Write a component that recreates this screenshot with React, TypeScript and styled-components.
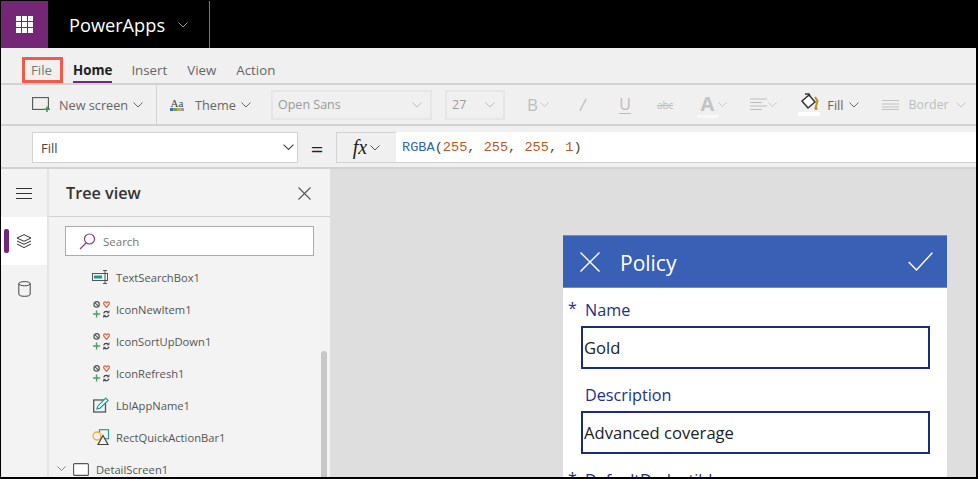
import React from 'react'
import styled, { createGlobalStyle } from 'styled-components'

const GlobalStyle = createGlobalStyle`
  html, body {
    margin: 0;
    padding: 0;
    overflow: hidden;
    background: #000;
  }
`

const Chevron = ({ size = 10, color = '#666' }: { size?: number; color?: string }) => (
  <svg width={size} height={size * 0.6} viewBox="0 0 10 6" fill="none" stroke={color} strokeWidth="1">
    <path d="M0.5 0.5 L5 5 L9.5 0.5" />
  </svg>
)

const Waffle = () => (
  <svg width="17" height="17" viewBox="0 0 17 17" fill="#fff">
    {[0, 6, 12].map(y =>
      [0, 6, 12].map(x => <rect key={`${x}-${y}`} x={x} y={y} width="5" height="5" />),
    )}
  </svg>
)

const MultiIcon = () => (
  <svg width="17" height="17" viewBox="0 0 17 17" fill="none">
    <circle cx="3.6" cy="3.4" r="2.7" stroke="#555" strokeWidth="1.2" />
    <path d="M1.8 1.6 L5.4 5.2" stroke="#555" strokeWidth="1.1" />
    <path d="M13.5 6.4 L10.8 3.2 Q10.2 0.9 12 0.9 L13.5 1.8 L15 0.9 Q16.8 0.9 16.2 3.2 Z" stroke="#e8683a" strokeWidth="1.2" />
    <path d="M3.6 9.6 V16.4 M0 13 H7.2" stroke="#4aa564" strokeWidth="1.5" />
    <path d="M10.6 12.4 Q11.4 10.2 13.6 10.4 L15.6 11.2 M16 13.8 Q15.2 16 13 15.8 L11 15" stroke="#444" strokeWidth="1.2" />
    <path d="M16 9.6 V11.8 H13.8 M10.6 16.6 V14.4 H12.8" stroke="#444" strokeWidth="0.9" />
  </svg>
)

const TextBoxIcon = () => (
  <svg width="18" height="14" viewBox="0 0 18 14" fill="none">
    <rect x="0.5" y="3.5" width="15" height="7" fill="none" stroke="#555" />
    <rect x="2" y="5.5" width="8" height="3" fill="#1a9a8c" />
    <path d="M11 0.5 H15 M13 0.5 V13.5 M11 13.5 H15" stroke="#555" strokeWidth="1" />
  </svg>
)

const LabelIcon = () => (
  <svg width="16" height="16" viewBox="0 0 16 16" fill="none">
    <rect x="0.7" y="3" width="11.8" height="12" stroke="#555" strokeWidth="1.3" />
    <path d="M4 12 L4.8 9.2 L12.8 1.2 L15 3.4 L7 11.2 Z" fill="#fff" stroke="#1a9a8c" strokeWidth="1.2" />
  </svg>
)

const ShapesIcon = () => (
  <svg width="18" height="17" viewBox="0 0 18 17" fill="none">
    <rect x="7.5" y="0.7" width="9" height="9" stroke="#2a9d8f" strokeWidth="1.2" />
    <circle cx="5" cy="7" r="4" fill="#f3f3f3" stroke="#f0b030" strokeWidth="1.3" />
    <path d="M11 6.5 L16 15.5 H6 Z" fill="#f3f3f3" stroke="#444" strokeWidth="1.2" />
  </svg>
)

const ScreenIcon = () => (
  <svg width="16" height="13" viewBox="0 0 16 13" fill="none">
    <rect x="0.6" y="0.6" width="14.8" height="11.8" rx="1" fill="#fff" stroke="#555" strokeWidth="1.1" />
  </svg>
)

const treeRows = [
  { name: 'TextSearchBox1', icon: <TextBoxIcon /> },
  { name: 'IconNewItem1', icon: <MultiIcon /> },
  { name: 'IconSortUpDown1', icon: <MultiIcon /> },
  { name: 'IconRefresh1', icon: <MultiIcon /> },
  { name: 'LblAppName1', icon: <LabelIcon /> },
  { name: 'RectQuickActionBar1', icon: <ShapesIcon /> },
]

export default function App() {
  return (
    <Frame>
      <GlobalStyle />
      <TopBar>
        <WaffleButton>
          <Waffle />
        </WaffleButton>
        <AppSwitcher>
          <AppName>PowerApps</AppName>
          <Chevron size={10} color="#9a9a9a" />
        </AppSwitcher>
      </TopBar>

      <MenuRow>
        <MenuTab $boxed>File</MenuTab>
        <MenuTab $active>Home</MenuTab>
        <MenuTab>Insert</MenuTab>
        <MenuTab>View</MenuTab>
        <MenuTab>Action</MenuTab>
      </MenuRow>

      <Toolbar>
        <ToolGroup $width={124}>
          <svg width="19" height="15" viewBox="0 0 19 15" fill="none">
            <rect x="0.6" y="0.6" width="15.8" height="11.8" fill="none" stroke="#555" strokeWidth="1.1" />
            <path d="M15 9.5 V15 M12.5 12.2 H18" stroke="#3c9a4f" strokeWidth="1.6" />
          </svg>
          <ToolLabel $left={8}>New screen</ToolLabel>
          <Chevron />
        </ToolGroup>
        <ToolDivider />
        <ToolGroup $width={101}>
          <ThemeMark>
            <ThemeText>Aa</ThemeText>
            <svg width="14" height="3" viewBox="0 0 14 3">
              <rect width="3.5" height="3" fill="#3a6fb5" />
              <rect x="3.5" width="3.5" height="3" fill="#6aa84f" />
              <rect x="7" width="3.5" height="3" fill="#e0a030" />
              <rect x="10.5" width="3.5" height="3" fill="#999" />
            </svg>
          </ThemeMark>
          <ToolLabel $left={11}>Theme</ToolLabel>
          <Chevron />
        </ToolGroup>
        <SelectBox $width={161}>
          Open Sans
          <Chevron color="#bbb" />
        </SelectBox>
        <SelectBox $width={60} $left={13}>
          27
          <Chevron color="#bbb" />
        </SelectBox>
        <GlyphB>B</GlyphB>
        <Chevron color="#c4c4c4" size={9} />
        <GlyphItalic>/</GlyphItalic>
        <GlyphUnderline>U</GlyphUnderline>
        <GlyphStrike>abc</GlyphStrike>
        <FontColor>
          A<FontColorBar />
        </FontColor>
        <Chevron color="#c4c4c4" size={9} />
        <AlignIcon width="17" height="14" viewBox="0 0 17 14" stroke="#bdbdbd">
          <path d="M0 1 H17 M0 4.5 H12 M0 8 H17 M0 11.5 H12" />
        </AlignIcon>
        <Chevron color="#c4c4c4" size={9} />
        <FillGroup>
          <svg width="20" height="18" viewBox="0 0 20 18" fill="none">
            <path d="M3 8 L10 2 L16 9 L9 15 Z" fill="#fff" stroke="#333" strokeWidth="1.5" />
            <path d="M6 1 H10 L11 3" stroke="#333" strokeWidth="1.5" />
            <path d="M16 4 L18.5 8 L16.5 15" stroke="#b8932a" strokeWidth="2" />
            <circle cx="17" cy="15.5" r="1.6" fill="#b8932a" />
          </svg>
          <FillBar />
        </FillGroup>
        <ToolLabel $left={7}>Fill</ToolLabel>
        <ToolChevron>
          <Chevron />
        </ToolChevron>
        <BorderIcon width="17" height="10" viewBox="0 0 17 10" stroke="#c2c2c2">
          <path d="M0 0.5 H17 M0 4 H17 M0 7 H17 M0 9.5 H17" />
        </BorderIcon>
        <BorderLabel>Border</BorderLabel>
        <ToolChevron>
          <Chevron color="#c4c4c4" />
        </ToolChevron>
      </Toolbar>

      <FormulaRow>
        <PropertySelect>
          Fill
          <Chevron size={11} color="#444" />
        </PropertySelect>
        <EqualsSign>=</EqualsSign>
        <FxButton>
          <FxMark>fx</FxMark>
          <Chevron color="#555" />
        </FxButton>
        <FormulaInput>
          <FnName>RGBA</FnName>(<Num>255</Num>, <Num>255</Num>, <Num>255</Num>, <Num>1</Num>)
        </FormulaInput>
      </FormulaRow>

      <Main>
        <Rail>
          <RailItem>
            <svg width="16" height="11" viewBox="0 0 16 11" stroke="#333">
              <path d="M0 0.5 H16 M0 5.5 H16 M0 10.5 H16" />
            </svg>
          </RailItem>
          <RailItem $active>
            <RailMarker />
            <svg width="16" height="15" viewBox="0 0 16 15" fill="none" stroke="#333">
              <path d="M8 0.7 L15 4 L8 7.3 L1 4 Z" />
              <path d="M1 7 L8 10.3 L15 7" />
              <path d="M1 10 L8 13.6 L15 10" />
            </svg>
          </RailItem>
          <RailItem>
            <svg width="13" height="16" viewBox="0 0 13 16" fill="none" stroke="#444">
              <ellipse cx="6.5" cy="2.7" rx="5.7" ry="2.1" />
              <path d="M0.8 2.7 V13 Q0.8 15.3 6.5 15.3 Q12.2 15.3 12.2 13 V2.7" />
            </svg>
          </RailItem>
        </Rail>

        <TreePanel>
          <TreeHeader>
            <TreeTitle>Tree view</TreeTitle>
            <svg width="13" height="13" viewBox="0 0 13 13" stroke="#555" strokeWidth="1.1">
              <path d="M0.5 0.5 L12.5 12.5 M12.5 0.5 L0.5 12.5" />
            </svg>
          </TreeHeader>
          <SearchBox>
            <svg width="17" height="17" viewBox="0 0 17 17" fill="none" stroke="#8a3f8a" strokeWidth="1.2">
              <circle cx="10.5" cy="6" r="5" />
              <path d="M7 10 L1 16" />
            </svg>
            Search
          </SearchBox>
          <TreeList>
            {treeRows.map(row => (
              <TreeRow key={row.name}>
                <TreeIcon>{row.icon}</TreeIcon>
                {row.name}
              </TreeRow>
            ))}
            <ScreenRow>
              <Chevron size={9} color="#777" />
              <ScreenIcon />
              DetailScreen1
            </ScreenRow>
          </TreeList>
          <ScrollThumb />
        </TreePanel>

        <Canvas>
          <Card>
            <CardHeader>
              <svg width="20" height="20" viewBox="0 0 20 20" stroke="#fff" strokeWidth="1.4">
                <path d="M0.5 0.5 L19.5 19.5 M19.5 0.5 L0.5 19.5" />
              </svg>
              <CardTitle>Policy</CardTitle>
              <svg width="25" height="19" viewBox="0 0 25 19" fill="none" stroke="#fff" strokeWidth="1.4">
                <path d="M0.7 10 L8.5 18 L24.4 0.7" />
              </svg>
            </CardHeader>
            <Field>
              <FieldLabel $required>Name</FieldLabel>
              <FieldInput>Gold</FieldInput>
            </Field>
            <Field>
              <FieldLabel>Description</FieldLabel>
              <FieldInput>Advanced coverage</FieldInput>
            </Field>
            <Field>
              <FieldLabel $required>DefaultDeductible</FieldLabel>
            </Field>
          </Card>
        </Canvas>
      </Main>
    </Frame>
  )
}

const Frame = styled.div`
  box-sizing: border-box;
  width: 978px;
  height: 479px;
  border-left: 1px solid #000;
  border-right: 2px solid #000;
  border-bottom: 2px solid #000;
  display: flex;
  flex-direction: column;
  overflow: hidden;
  background: #f0f0f0;
  font-family: 'Open Sans', sans-serif;
`

const TopBar = styled.div`
  flex: none;
  height: 48px;
  display: flex;
  background: #000;
`

const WaffleButton = styled.div`
  width: 47px;
  margin-top: 1px;
  display: flex;
  align-items: center;
  justify-content: center;
  background: #742774;
`

const AppSwitcher = styled.div`
  width: 162px;
  margin-top: 1px;
  padding-left: 21px;
  box-sizing: border-box;
  display: flex;
  align-items: center;
  gap: 13px;
  border-right: 1px solid #777;
`

const AppName = styled.span`
  color: #fff;
  font-size: 18.2px;
  line-height: 24px;
`

const MenuRow = styled.div`
  flex: none;
  box-sizing: border-box;
  height: 37px;
  padding: 9px 0 0 21px;
  display: flex;
  align-items: flex-start;
  gap: 20px;
  border-bottom: 2px solid #d2d2d2;
`

const MenuTab = styled.div<{ $active?: boolean; $boxed?: boolean }>`
  box-sizing: border-box;
  height: ${p => (p.$boxed ? '26px' : '24px')};
  margin-top: ${p => (p.$boxed ? '0' : '2px')};
  margin-right: ${p => (p.$boxed ? '-10px' : p.$active ? '-1px' : '0')};
  padding: ${p => (p.$boxed ? '0 8px 0 6px' : '0')};
  border: ${p => (p.$boxed ? '3px solid #f4594b' : 'none')};
  border-width: ${p => (p.$boxed ? '3px' : '0')};
  border-bottom: ${p => (p.$active ? '2px solid #742774' : p.$boxed ? '3px solid #f4594b' : 'none')};
  color: ${p => (p.$active ? '#222' : p.$boxed ? '#777' : '#666')};
  font-size: 13.3px;
  font-weight: ${p => (p.$active ? 700 : 400)};
  line-height: ${p => (p.$boxed ? '20px' : '22px')};
`

const Toolbar = styled.div`
  flex: none;
  box-sizing: border-box;
  height: 41px;
  padding-left: 31px;
  display: flex;
  align-items: center;
  border-bottom: 2px solid #d2d2d2;
  color: #666;
  font-size: 12.7px;
`

const ToolGroup = styled.div<{ $width: number }>`
  width: ${p => p.$width}px;
  flex: none;
  display: flex;
  align-items: center;
`

const ToolLabel = styled.span<{ $left?: number }>`
  margin-left: ${p => p.$left ?? 0}px;
  margin-right: 5px;
`

const ToolDivider = styled.div`
  width: 1px;
  height: 39px;
  margin-right: 13px;
  background: #d2d2d2;
`

const ThemeMark = styled.div`
  width: 14px;
  display: flex;
  flex-direction: column;
  align-items: center;
`

const ThemeText = styled.span`
  font-family: 'Liberation Serif', serif;
  font-size: 11px;
  line-height: 10px;
  color: #444;
`

const SelectBox = styled.div<{ $width: number; $left?: number }>`
  box-sizing: border-box;
  width: ${p => p.$width}px;
  height: 30px;
  flex: none;
  margin-left: ${p => p.$left ?? 0}px;
  padding: 0 8px 0 5px;
  display: flex;
  align-items: center;
  justify-content: space-between;
  border: 2px solid #e6e6e6;
  color: #9a9a9a;
  font-size: 12.5px;
`

const GlyphB = styled.span`
  margin-left: 22px;
  margin-right: 2px;
  color: #bdbdbd;
  font-size: 17px;
`

const GlyphItalic = styled.span`
  margin-left: 31px;
  color: #bdbdbd;
  font-size: 17px;
  transform: skewX(-8deg);
`

const GlyphUnderline = styled.span`
  margin-left: 33px;
  color: #bdbdbd;
  font-size: 16px;
  border-bottom: 1px solid #bdbdbd;
  line-height: 17px;
`

const GlyphStrike = styled.span`
  margin-left: 26px;
  color: #bdbdbd;
  font-size: 10px;
  text-decoration: line-through;
`

const FontColor = styled.div`
  margin-left: 24px;
  margin-right: 1px;
  width: 20px;
  display: flex;
  flex-direction: column;
  align-items: center;
  color: #c4c4c4;
  font-size: 20px;
  font-weight: 700;
  line-height: 23px;
`

const FontColorBar = styled.div`
  width: 21px;
  height: 3px;
  background: #f8f8f8;
`

const AlignIcon = styled.svg`
  margin-left: 23px;
  margin-right: 1px;
`

const FillGroup = styled.div`
  margin-left: 21px;
  display: flex;
  flex-direction: column;
  align-items: center;
  gap: 1px;
`

const FillBar = styled.div`
  width: 22px;
  height: 4px;
  background: #fff;
`

const ToolChevron = styled.span`
  display: flex;
`

const BorderIcon = styled.svg`
  margin-left: 23px;
`

const BorderLabel = styled.span`
  margin-left: 10px;
  margin-right: 7px;
  color: #bdbdbd;
  font-size: 12.4px;
`

const FormulaRow = styled.div`
  flex: none;
  box-sizing: border-box;
  height: 43px;
  padding: 6px 0 4px 31px;
  display: flex;
  align-items: stretch;
  border-bottom: 2px solid #d2d2d2;
`

const PropertySelect = styled.div`
  box-sizing: border-box;
  width: 266px;
  padding: 0 3px 0 8px;
  display: flex;
  align-items: center;
  justify-content: space-between;
  background: #fff;
  border: 1px solid #d2d2d2;
  color: #444;
  font-size: 13px;
`

const EqualsSign = styled.div`
  width: 38px;
  display: flex;
  align-items: center;
  justify-content: center;
  color: #222;
  font-size: 22px;
`

const FxButton = styled.div`
  box-sizing: border-box;
  width: 60px;
  display: flex;
  align-items: center;
  justify-content: center;
  gap: 3px;
  border: 1px solid #d2d2d2;
  border-right: none;
`

const FxMark = styled.span`
  color: #222;
  font-family: 'Liberation Serif', serif;
  font-size: 20px;
  font-style: italic;
`

const FormulaInput = styled.div`
  flex: 1;
  padding-left: 6px;
  display: flex;
  align-items: center;
  white-space: pre;
  background: #fff;
  border-bottom: 1px solid #d2d2d2;
  color: #444;
  font-family: 'Liberation Mono', monospace;
  font-size: 13.6px;
`

const FnName = styled.span`
  color: #2f68ad;
`

const Num = styled.span`
  color: #c0571b;
`

const Main = styled.div`
  flex: 1;
  min-height: 0;
  display: flex;
`

const Rail = styled.div`
  flex: none;
  box-sizing: border-box;
  width: 48px;
  display: flex;
  flex-direction: column;
  background: #f3f3f3;
  border-right: 2px solid #e4e4e4;
`

const RailItem = styled.div<{ $active?: boolean }>`
  position: relative;
  height: 48px;
  display: flex;
  align-items: center;
  justify-content: center;
  background: ${p => (p.$active ? '#fff' : 'transparent')};
`

const RailMarker = styled.div`
  position: absolute;
  left: 3px;
  top: 12px;
  width: 5px;
  height: 24px;
  border-radius: 2px;
  background: #742774;
`

const TreePanel = styled.div`
  position: relative;
  flex: none;
  width: 281px;
  display: flex;
  flex-direction: column;
  background: #f3f3f3;
  overflow: hidden;
`

const TreeHeader = styled.div`
  flex: none;
  box-sizing: border-box;
  height: 48px;
  padding: 1px 19px 0 17px;
  display: flex;
  align-items: center;
  justify-content: space-between;
  border-bottom: 1px solid #d2d2d2;
`

const TreeTitle = styled.span`
  color: #333;
  font-size: 16.2px;
  font-weight: 600;
`

const SearchBox = styled.div`
  flex: none;
  box-sizing: border-box;
  width: 249px;
  height: 30px;
  margin: 9px 0 5px 16px;
  padding-left: 13px;
  display: flex;
  align-items: center;
  gap: 7px;
  background: #fff;
  border: 1px solid #aaa;
  color: #777;
  font-size: 11.5px;
`

const TreeList = styled.div`
  display: flex;
  flex-direction: column;
  color: #555;
  font-size: 11.2px;
`

const TreeRow = styled.div`
  flex: none;
  height: 32px;
  padding-left: 43px;
  display: flex;
  align-items: center;
`

const TreeIcon = styled.span`
  width: 18px;
  margin-right: 6px;
  display: flex;
  justify-content: center;
`

const ScreenRow = styled.div`
  flex: none;
  height: 32px;
  padding-left: 8px;
  display: flex;
  align-items: center;
  gap: 7px;
`

const ScrollThumb = styled.div`
  position: absolute;
  right: 3px;
  top: 182px;
  bottom: 0;
  width: 6px;
  border-radius: 3px 3px 0 0;
  background: #c8c8c8;
`

const Canvas = styled.div`
  flex: 1;
  min-width: 0;
  padding: 66px 0 0 233px;
  background: #dedede;
  overflow: hidden;
`

const Card = styled.div`
  width: 384px;
  height: 400px;
  background: #fff;
`

const CardHeader = styled.div`
  box-sizing: border-box;
  height: 53px;
  padding: 0 14px 0 17px;
  display: flex;
  align-items: center;
  background: #3a60b6;
  border: 1px solid #6f8cca;
  border-width: 1px 0;
`

const CardTitle = styled.span`
  flex: 1;
  margin: 2px 0 0 20px;
  color: #fff;
  font-size: 21px;
`

const Field = styled.div`
  box-sizing: border-box;
  padding: 10px 17px 0 18px;
  height: 85px;
`

const FieldLabel = styled.div<{ $required?: boolean }>`
  position: relative;
  height: 28px;
  padding-left: 4px;
  color: #22308c;
  font-size: 16.2px;
  line-height: 24px;

  &::before {
    content: ${p => (p.$required ? '"*"' : 'none')};
    position: absolute;
    left: -13px;
    top: -2px;
    font-size: 16px;
  }
`

const FieldInput = styled.div`
  box-sizing: border-box;
  width: 349px;
  height: 43px;
  padding: 0 0 1px 1px;
  display: flex;
  align-items: center;
  border: 2px solid #1c2a80;
  color: #222;
  font-size: 16.6px;
`
